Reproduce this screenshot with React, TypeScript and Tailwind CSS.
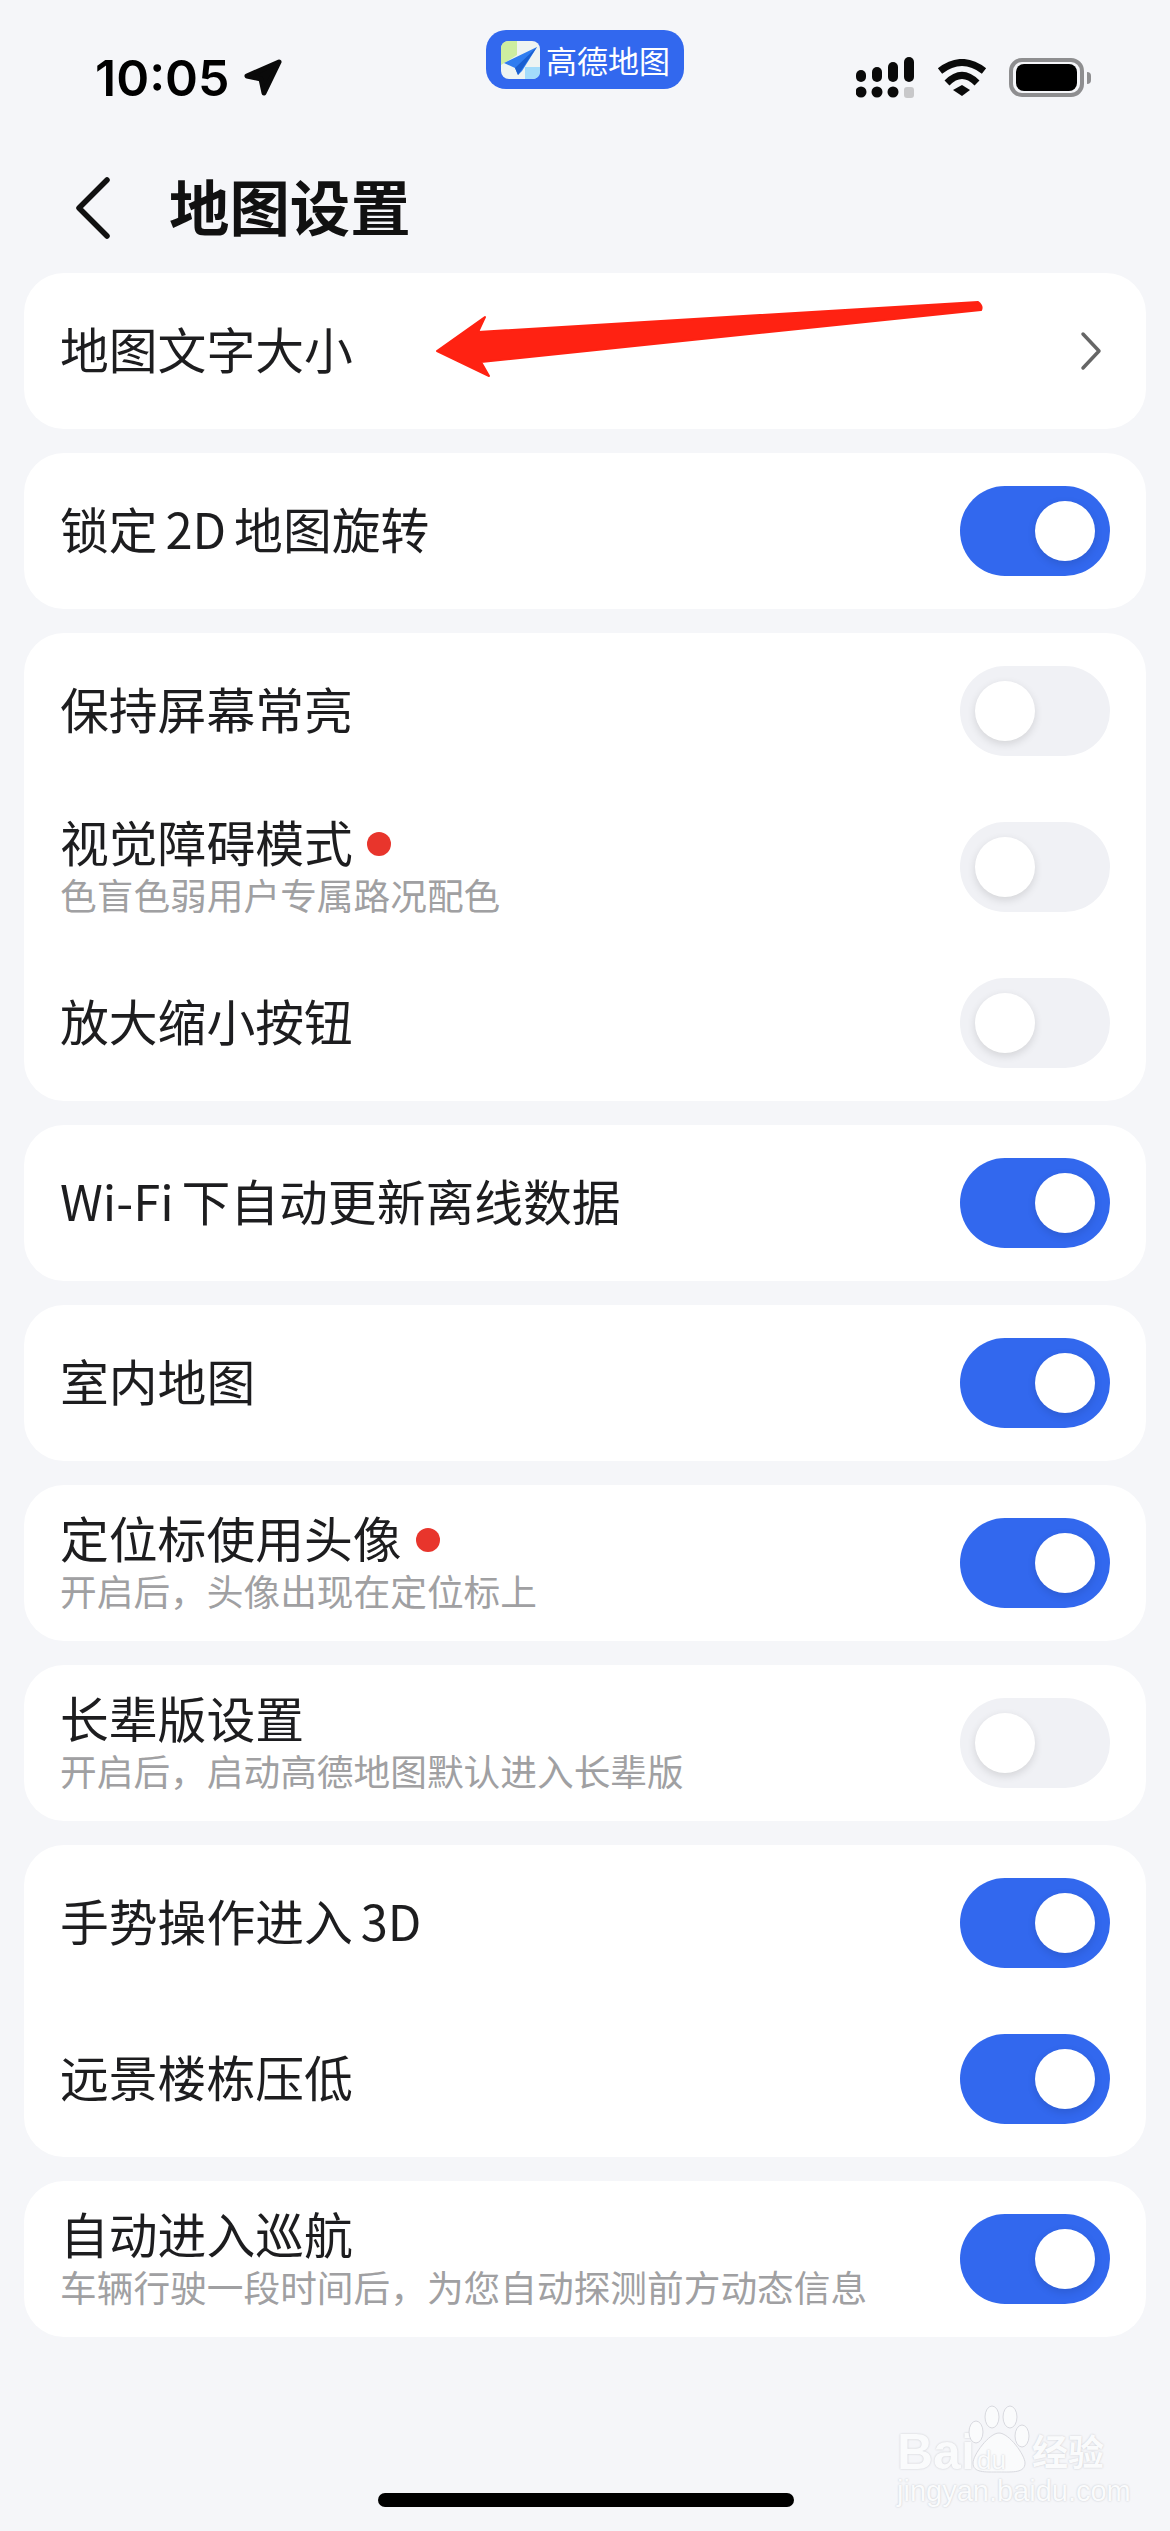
import React from "react";

type Row = { title: string; sub?: string; dot?: boolean; on?: boolean; chevron?: boolean };

const cards: Row[][] = [
  [{ title: "地图文字大小", chevron: true }],
  [{ title: "锁定 2D 地图旋转", on: true }],
  [
    { title: "保持屏幕常亮" },
    { title: "视觉障碍模式", sub: "色盲色弱用户专属路况配色", dot: true },
    { title: "放大缩小按钮" },
  ],
  [{ title: "Wi-Fi 下自动更新离线数据", on: true }],
  [{ title: "室内地图", on: true }],
  [{ title: "定位标使用头像", sub: "开启后，头像出现在定位标上", dot: true, on: true }],
  [{ title: "长辈版设置", sub: "开启后，启动高德地图默认进入长辈版" }],
  [
    { title: "手势操作进入 3D", on: true },
    { title: "远景楼栋压低", on: true },
  ],
  [{ title: "自动进入巡航", sub: "车辆行驶一段时间后，为您自动探测前方动态信息", on: true }],
];

const Toggle = ({ on }: { on?: boolean }) => (
  <div
    className={
      on
        ? "flex h-[90px] w-[150px] items-center justify-end rounded-full bg-[#3268ee] px-[15px]"
        : "flex h-[90px] w-[150px] items-center justify-start rounded-full bg-[#f0f1f5] px-[15px]"
    }
  >
    <div className="h-[60px] w-[60px] rounded-full bg-white shadow-[0_3px_8px_rgba(0,0,0,0.12)]" />
  </div>
);

const SettingRow = ({ row }: { row: Row }) => (
  <div className="flex h-[156px] items-center justify-between pl-[36px] pr-[36px]">
    <div className="mb-[6px] flex flex-col">
      <div className="flex items-center text-[48.8px] leading-[60px] text-[#1d1d1f] [word-spacing:-3px]">
        <span>{row.title}</span>
        {row.dot && <span className="ml-[14px] mt-[6px] h-[24px] w-[24px] rounded-full bg-[#e8352c]" />}
      </div>
      {row.sub && <div className="text-[36.7px] leading-[46px] text-[#a0a0a2]">{row.sub}</div>}
    </div>
    {row.chevron ? (
      <svg width="24" height="40" viewBox="0 0 24 40" fill="none" stroke="#666" strokeWidth="3.5" strokeLinecap="round" strokeLinejoin="round" className="mr-[7px]">
        <path d="M4 3 L20 20 L4 37" />
      </svg>
    ) : (
      <Toggle on={row.on} />
    )}
  </div>
);

const StatusBar = () => (
  <div className="relative h-[143px]">
    <div className="flex h-[98px] items-end justify-between pl-[95px] pr-[79px]">
      <div className="flex h-[41px] items-center gap-[14px]">
        <span className="text-[50px] font-semibold leading-none text-black [font-family:Inter,sans-serif]">10:05</span>
        <svg width="39" height="39" viewBox="0 0 39 39" fill="#0a0a0a" stroke="#0a0a0a" strokeWidth="5" strokeLinejoin="round">
          <path d="M35 4 L3 18 L17 21 L20 35 Z" />
        </svg>
      </div>
      <div className="flex h-[41px] items-center">
        <svg width="58" height="41" viewBox="0 0 58 41" fill="#0a0a0a">
          <rect x="0" y="13" width="10" height="12" rx="5" />
          <rect x="16" y="10" width="10" height="15" rx="5" />
          <rect x="32" y="5" width="10" height="20" rx="5" />
          <rect x="48" y="0" width="10" height="25" rx="5" />
          <circle cx="5" cy="35" r="5.5" />
          <circle cx="21" cy="35" r="5.5" />
          <circle cx="37" cy="35" r="5.5" />
          <rect x="48" y="30" width="10" height="11" rx="3" fill="#c8c8ca" />
        </svg>
        <svg width="50" height="38" viewBox="0 0 50 38" fill="none" stroke="#0a0a0a" strokeWidth="7" className="ml-[23px]">
          <path d="M3 12 Q25 -5 47 12" />
          <path d="M10 24 Q25 9 40 24" />
          <path d="M16 31 L25 26 L33 31 L25 37 Z" fill="#0a0a0a" stroke="none" />
        </svg>
        <div className="ml-[22px] flex items-center">
          <div className="flex h-[39px] w-[75px] items-center justify-center rounded-[13px] border-[4px] border-[#8e8e90]">
            <div className="h-[27px] w-[61px] rounded-[8px] bg-black" />
          </div>
          <div className="ml-[3px] h-[12px] w-[4px] rounded-r-full bg-[#8e8e90]" />
        </div>
      </div>
    </div>

    {/* app pill over the status bar */}
    <div className="absolute left-[486px] top-[30px] flex h-[59px] w-[198px] items-center rounded-[20px] bg-[#3268ee] pl-[15px]">
      <svg width="39" height="38" viewBox="0 0 39 38">
        <rect width="39" height="38" rx="8" fill="#eef4f2" />
        <path d="M8 0 H16 V14 L0 24 V8 Q0 0 8 0 Z" fill="#cdeea0" />
        <path d="M24 26 H39 V30 Q39 38 31 38 H24 Z" fill="#a3dcfb" />
        <path d="M36 6 L3 22 L14 27 L17 34 L21 30 Z" fill="#2f7df0" />
        <path d="M36 6 L14 27 L17 34 Z" fill="#1a5fd0" />
      </svg>
      <span className="ml-[6px] text-[31px] leading-none text-white">高德地图</span>
    </div>
  </div>
);

const Watermark = () => (
  <div className="absolute left-[895px] top-[2405px] h-[105px] w-[220px] text-[#fafbfc] [text-shadow:0_0_2px_#c4c5cb]">
    <span className="absolute left-[2px] top-[22px] text-[50px] font-bold leading-none [font-family:'Liberation_Sans',sans-serif]">Bai</span>
    <svg width="70" height="70" viewBox="0 0 70 70" className="absolute left-[70px] top-0">
      <g fill="#fafbfc" stroke="#d8d9df" strokeWidth="1">
        <ellipse cx="11" cy="27" rx="7" ry="11" />
        <ellipse cx="27" cy="12" rx="7" ry="11" />
        <ellipse cx="45" cy="12" rx="7" ry="11" />
        <ellipse cx="57" cy="31" rx="7" ry="11" />
        <path d="M34 28 C44 28 60 50 60 58 C60 68 48 67 34 67 C20 67 8 68 8 58 C8 50 24 28 34 28 Z" />
      </g>
    </svg>
    <span className="absolute left-[82px] top-[42px] text-[26px] leading-none text-[#fafbfc] [font-family:'Liberation_Sans',sans-serif]">du</span>
    <span className="absolute left-[137px] top-[27px] text-[36px] font-bold leading-none">经验</span>
    <span className="absolute left-[2px] top-[72px] text-[29px] leading-none [font-family:'Liberation_Sans',sans-serif]">jingyan.baidu.com</span>
  </div>
);

export default function App() {
  return (
    <div className="relative h-[2531px] w-[1170px] overflow-hidden bg-[#f5f6f9] [font-family:'Noto_Sans_CJK_SC',sans-serif]">
      <StatusBar />

      <div className="flex h-[130px] items-center pl-[75px]">
        <svg width="36" height="62" viewBox="0 0 36 62" fill="none" stroke="#111" strokeWidth="5.5" strokeLinecap="round" strokeLinejoin="round">
          <path d="M32 3 L4 31 L32 59" />
        </svg>
        <h1 className="mb-[6px] ml-[58px] text-[60.4px] font-bold leading-none text-[#111]">地图设置</h1>
      </div>

      <div className="flex flex-col gap-[24px] px-[24px]">
        {cards.map((rows, i) => (
          <div key={i} className="rounded-[40px] bg-white">
            {rows.map((row) => (
              <SettingRow key={row.title} row={row} />
            ))}
          </div>
        ))}
      </div>

      {/* red annotation arrow drawn over the first row */}
      <svg width="560" height="90" viewBox="0 0 560 90" className="absolute left-[430px] top-[295px]">
        <path
          d="M7 56 L55 22 L48 37 L548 7 Q553 11 551 15 L51 67 L59 81 Z"
          fill="#ff2212"
          stroke="#ff2212"
          strokeWidth="2"
          strokeLinejoin="round"
        />
      </svg>

      <Watermark />

      <div className="absolute left-[378px] top-[2493px] h-[14px] w-[416px] rounded-full bg-black" />
    </div>
  );
}
